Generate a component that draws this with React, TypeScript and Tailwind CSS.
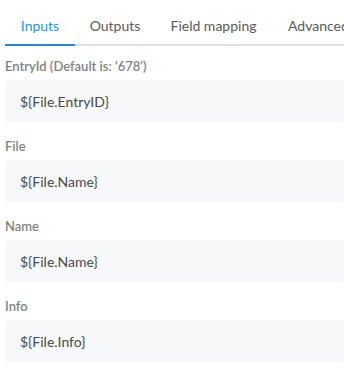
import React from 'react';

const tabs = [
  { name: 'Inputs', w: 'w-[70px] justify-center' },
  { name: 'Outputs', w: 'w-[80px] justify-center' },
  { name: 'Field mapping', w: 'w-[117px] justify-center' },
  { name: 'Advanced', w: 'w-[100px] pl-4' },
];

const fields = [
  { label: "EntryId (Default is: '678')", value: '${File.EntryID}' },
  { label: 'File', value: '${File.Name}' },
  { label: 'Name', value: '${File.Name}' },
  { label: 'Info', value: '${File.Info}' },
];

export default function App() {
  return (
    <div className="w-[344px] h-[389px] overflow-hidden bg-white font-['Lato',sans-serif]">
      <div className="flex w-[400px] ml-[5px] border-b-2 border-[#dedede]">
        {tabs.map((t, i) => (
          <div
            key={t.name}
            className={
              t.w +
              ' shrink-0 flex pt-[16px] pb-[8px] -mb-[2px] border-b-2 text-[14px] leading-[20px] whitespace-nowrap ' +
              (i === 0 ? 'border-[#1e88e5] text-[#2196f3]' : 'border-transparent text-[#5a5a5a]')
            }
          >
            {t.name}
          </div>
        ))}
      </div>
      <div className="flex flex-col pl-[5px] pt-[11px] w-[400px]">
        {fields.map(f => (
          <div key={f.label} className="flex flex-col mb-[15px]">
            <label className="h-[18px] leading-[18px] text-[13px] font-semibold text-[#828282] mb-[5px]">
              {f.label}
            </label>
            <div className="h-[42px] rounded-[4px] bg-[#f7f8fa] flex items-center pl-[15px] text-[14px] text-[#4a4a4a]">
              {f.value}
            </div>
          </div>
        ))}
      </div>
    </div>
  );
}
